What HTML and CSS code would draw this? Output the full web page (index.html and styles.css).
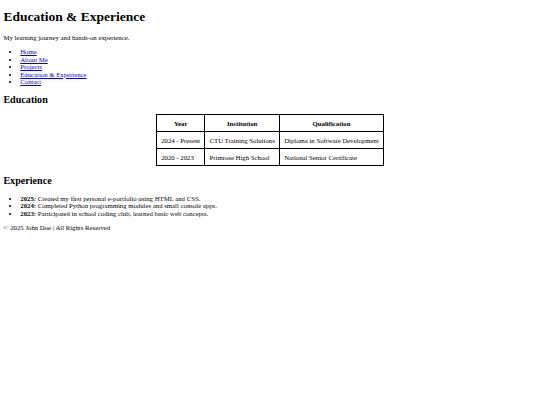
FILE: index.html
```html
<!DOCTYPE html>
<html lang="en">
<head>
<meta charset="utf-8">
<title>Education &amp; Experience</title>
<link rel="stylesheet" href="styles.css">
</head>
<body>
<header>
  <h1 class="title">Education &amp; Experience</h1>
  <p class="intro">My learning journey and hands-on experience.</p>
  <nav>
    <ul class="nav-list">
      <li><a href="#">Home</a></li>
      <li><a href="#">About Me</a></li>
      <li><a href="#">Projects</a></li>
      <li><a href="#">Education &amp; Experience</a></li>
      <li><a href="#">Contact</a></li>
    </ul>
  </nav>
</header>
<main>
  <section>
    <h2 class="section-title">Education</h2>
    <table class="edu-table">
      <thead>
        <tr><th>Year</th><th>Institution</th><th>Qualification</th></tr>
      </thead>
      <tbody>
        <tr><td>2024 - Present</td><td>CTU Training Solutions</td><td>Diploma in Software Development</td></tr>
        <tr><td>2020 - 2023</td><td>Primrose High School</td><td>National Senior Certificate</td></tr>
      </tbody>
    </table>
  </section>
  <section>
    <h2 class="section-title">Experience</h2>
    <ul class="exp-list">
      <li><strong>2025:</strong> Created my first personal e-portfolio using HTML and CSS.</li>
      <li><strong>2024:</strong> Completed Python programming modules and small console apps.</li>
      <li><strong>2023:</strong> Participated in school coding club, learned basic web concepts.</li>
    </ul>
  </section>
</main>
<footer>
  <p class="footer-text">&copy; 2025 John Doe | All Rights Reserved</p>
</footer>
</body>
</html>
```
FILE: styles.css
```css
html, body {
  background: #fff;
}
body {
  margin: 0 3.375px 3.375px;
  font-family: "Liberation Serif", "Times New Roman", serif;
  font-size: 6.75px;
  line-height: 7.6px;
  color: #000;
}
.title {
  font-size: 13.5px;
  line-height: 15.6px;
  margin: 9.05px 0;
}
.intro, .footer-text {
  margin: 6.75px 0;
}
.nav-list, .exp-list {
  margin: 6.75px 0;
  padding-left: 16.875px;
}
.nav-list a {
  color: #0000ee;
}
.section-title {
  font-size: 10.125px;
  line-height: 11.6px;
  margin: 8.4px 0;
}
.edu-table {
  border-collapse: collapse;
  margin: 8.4px auto;
}
.edu-table th,
.edu-table td {
  border: 1px solid #000;
  padding: 4.2px;
}
.edu-table td {
  text-align: left;
}
```
